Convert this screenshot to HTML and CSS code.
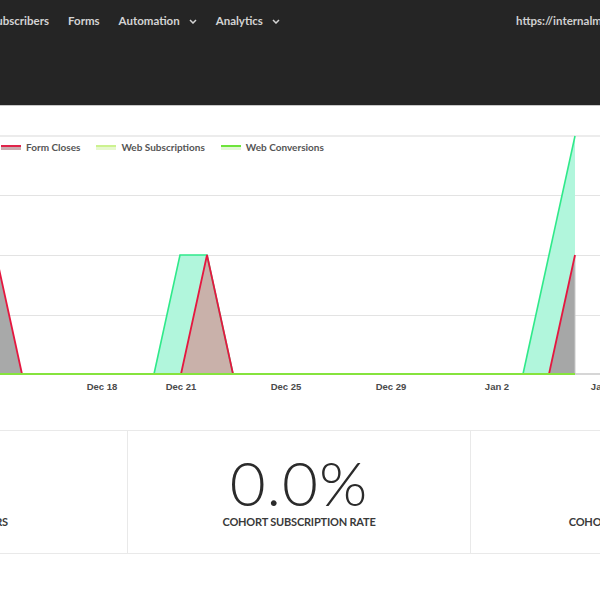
FILE: index.html
```html
<!DOCTYPE html>
<html>
<head>
<meta charset="utf-8">
<link rel="stylesheet" href="styles.css">
</head>
<body>
<div class="page">
  <header class="topbar">
    <nav class="nav">
      <a class="nav-item">Subscribers</a>
      <a class="nav-item">Forms</a>
      <a class="nav-item">Automation <svg class="chev" viewBox="0 0 8 5"><path d="M1 1 L4 4 L7 1" /></svg></a>
      <a class="nav-item">Analytics <svg class="chev" viewBox="0 0 8 5"><path d="M1 1 L4 4 L7 1" /></svg></a>
    </nav>
    <span class="url">https://internalmail.madmimi.com</span>
  </header>

  <section class="chart">
    <div class="legend">
      <span class="legend-item"><i class="sw sw-red"></i>Form Closes</span>
      <span class="legend-item"><i class="sw sw-lightgreen"></i>Web Subscriptions</span>
      <span class="legend-item"><i class="sw sw-green"></i>Web Conversions</span>
    </div>
    <svg class="plot" width="600" height="300" viewBox="0 0 600 300">
      <g class="grid">
        <line x1="0" y1="31" x2="600" y2="31" class="grid-top"/>
        <line x1="0" y1="90.5" x2="600" y2="90.5"/>
        <line x1="0" y1="150.5" x2="600" y2="150.5"/>
        <line x1="0" y1="210.5" x2="600" y2="210.5"/>
      </g>
      <polygon points="154,269 180,150 207,150 233,269" fill="#b1f6dc"/>
      <polygon points="523,269 575,31 575,269" fill="#b1f6dc"/>
      <polygon points="-4,150 22,269 -4,269" fill="#a8a9a9"/>
      <polygon points="181,269 207,150 233,269" fill="#c9b1aa"/>
      <polygon points="549,269 575,150 575,269" fill="#a6a7a7"/>
      <line x1="575" y1="150" x2="575" y2="269" stroke="#c9c9c9" stroke-width="1"/>
      <polyline points="154,269 180,150 207,150 233,269" fill="none" stroke="#2fe98a" stroke-width="1.6"/>
      <polyline points="523,269 575,31" fill="none" stroke="#2fe98a" stroke-width="1.6"/>
      <polyline points="-4,150 22,269" fill="none" stroke="#e5173f" stroke-width="1.8"/>
      <polyline points="181,269 207,150 233,269" fill="none" stroke="#e5173f" stroke-width="1.8"/>
      <polyline points="549,269 575,150" fill="none" stroke="#e5173f" stroke-width="1.8"/>
      <line x1="575" y1="269" x2="600" y2="269" stroke="#c8c8c8" stroke-width="1.5"/>
      <line x1="0" y1="269" x2="575" y2="269" stroke="#86e33d" stroke-width="2"/>
      <g class="axis">
        <text x="102" y="285">Dec 18</text>
        <text x="181" y="285">Dec 21</text>
        <text x="286" y="285">Dec 25</text>
        <text x="391" y="285">Dec 29</text>
        <text x="497" y="285">Jan 2</text>
        <text x="603" y="285">Jan 6</text>
      </g>
    </svg>
  </section>

  <section class="stats">
    <div class="stat">
      <div class="stat-value">0</div>
      <div class="stat-label">TOTAL SUBSCRIBERS</div>
    </div>
    <div class="stat">
      <div class="stat-value">0.0%</div>
      <div class="stat-label">COHORT SUBSCRIPTION RATE</div>
    </div>
    <div class="stat">
      <div class="stat-value">0</div>
      <div class="stat-label">COHORT CONVERSION RATE</div>
    </div>
  </section>
</div>
</body>
</html>
```

FILE: styles.css
```css
html, body {
  margin: 0;
  padding: 0;
  background: #ffffff;
  overflow: hidden;
}

body {
  font-family: Lato, "Open Sans", sans-serif;
  width: 600px;
  height: 600px;
}

.page {
  width: 600px;
}

.topbar {
  height: 105px;
  background: #252525;
  display: grid;
  grid-template-columns: 516px 1fr;
  align-items: start;
  box-shadow: 0 1px 0 #c9c9c9;
  overflow: hidden;
}

.nav {
  display: flex;
  align-items: center;
  gap: 19px;
  margin-left: -10px;
  padding-top: 13px;
}

.nav-item {
  color: #d4d4d4;
  font-weight: 700;
  font-size: 11.5px;
  line-height: 16px;
  display: flex;
  align-items: center;
  gap: 6px;
  white-space: nowrap;
}

.chev {
  width: 8px;
  height: 5px;
  fill: none;
  stroke: #d4d4d4;
  stroke-width: 1.5;
  margin-left: 3px;
  margin-top: 1px;
}

.url {
  color: #d0d0d0;
  font-weight: 700;
  font-size: 11.5px;
  line-height: 16px;
  padding-top: 13px;
  white-space: nowrap;
}

.chart {
  position: relative;
  height: 325px;
}

.plot {
  display: block;
}

.grid line {
  stroke: #e3e3e3;
  stroke-width: 1;
}

.grid .grid-top {
  stroke: #e6e6e6;
  stroke-width: 1.6;
}

.axis text {
  font-family: "Liberation Sans", Arial, sans-serif;
  font-weight: 700;
  font-size: 9.5px;
  fill: #4a4a4a;
  text-anchor: middle;
}

.legend {
  position: absolute;
  top: 36px;
  left: 1px;
  display: flex;
  gap: 16px;
  font-size: 10px;
  font-weight: 700;
  color: #555555;
}

.legend-item {
  display: flex;
  align-items: center;
  gap: 5px;
  line-height: 12px;
}

.sw {
  display: block;
  width: 20px;
  height: 5px;
}

.sw-red {
  border-top: 2px solid #e0234a;
  height: 3px;
  background: #c9abaf;
}

.sw-lightgreen {
  border-top: 2px solid #ccf28f;
  height: 3px;
  background: #e7f8cf;
}

.sw-green {
  border-top: 2px solid #6de43a;
  height: 3px;
  background: #e2f8d6;
}

.stats {
  display: grid;
  grid-template-columns: repeat(3, 343px);
  margin-left: -216px;
  border-top: 1px solid #e9e9e9;
  border-bottom: 1px solid #e9e9e9;
  height: 122px;
}

.stat {
  border-left: 1px solid #e9e9e9;
  display: flex;
  flex-direction: column;
  align-items: center;
  padding-top: 26px;
}

.stat:first-child {
  border-left: none;
}

.stat-value {
  font-family: Lato, sans-serif;
  font-weight: 300;
  font-size: 62px;
  line-height: 50px;
  color: #2b2b2b;
  letter-spacing: 1px;
}

.stat-label {
  margin-top: 8px;
  font-size: 11px;
  font-weight: 700;
  color: #3a3a3a;
  letter-spacing: -0.2px;
}
```
